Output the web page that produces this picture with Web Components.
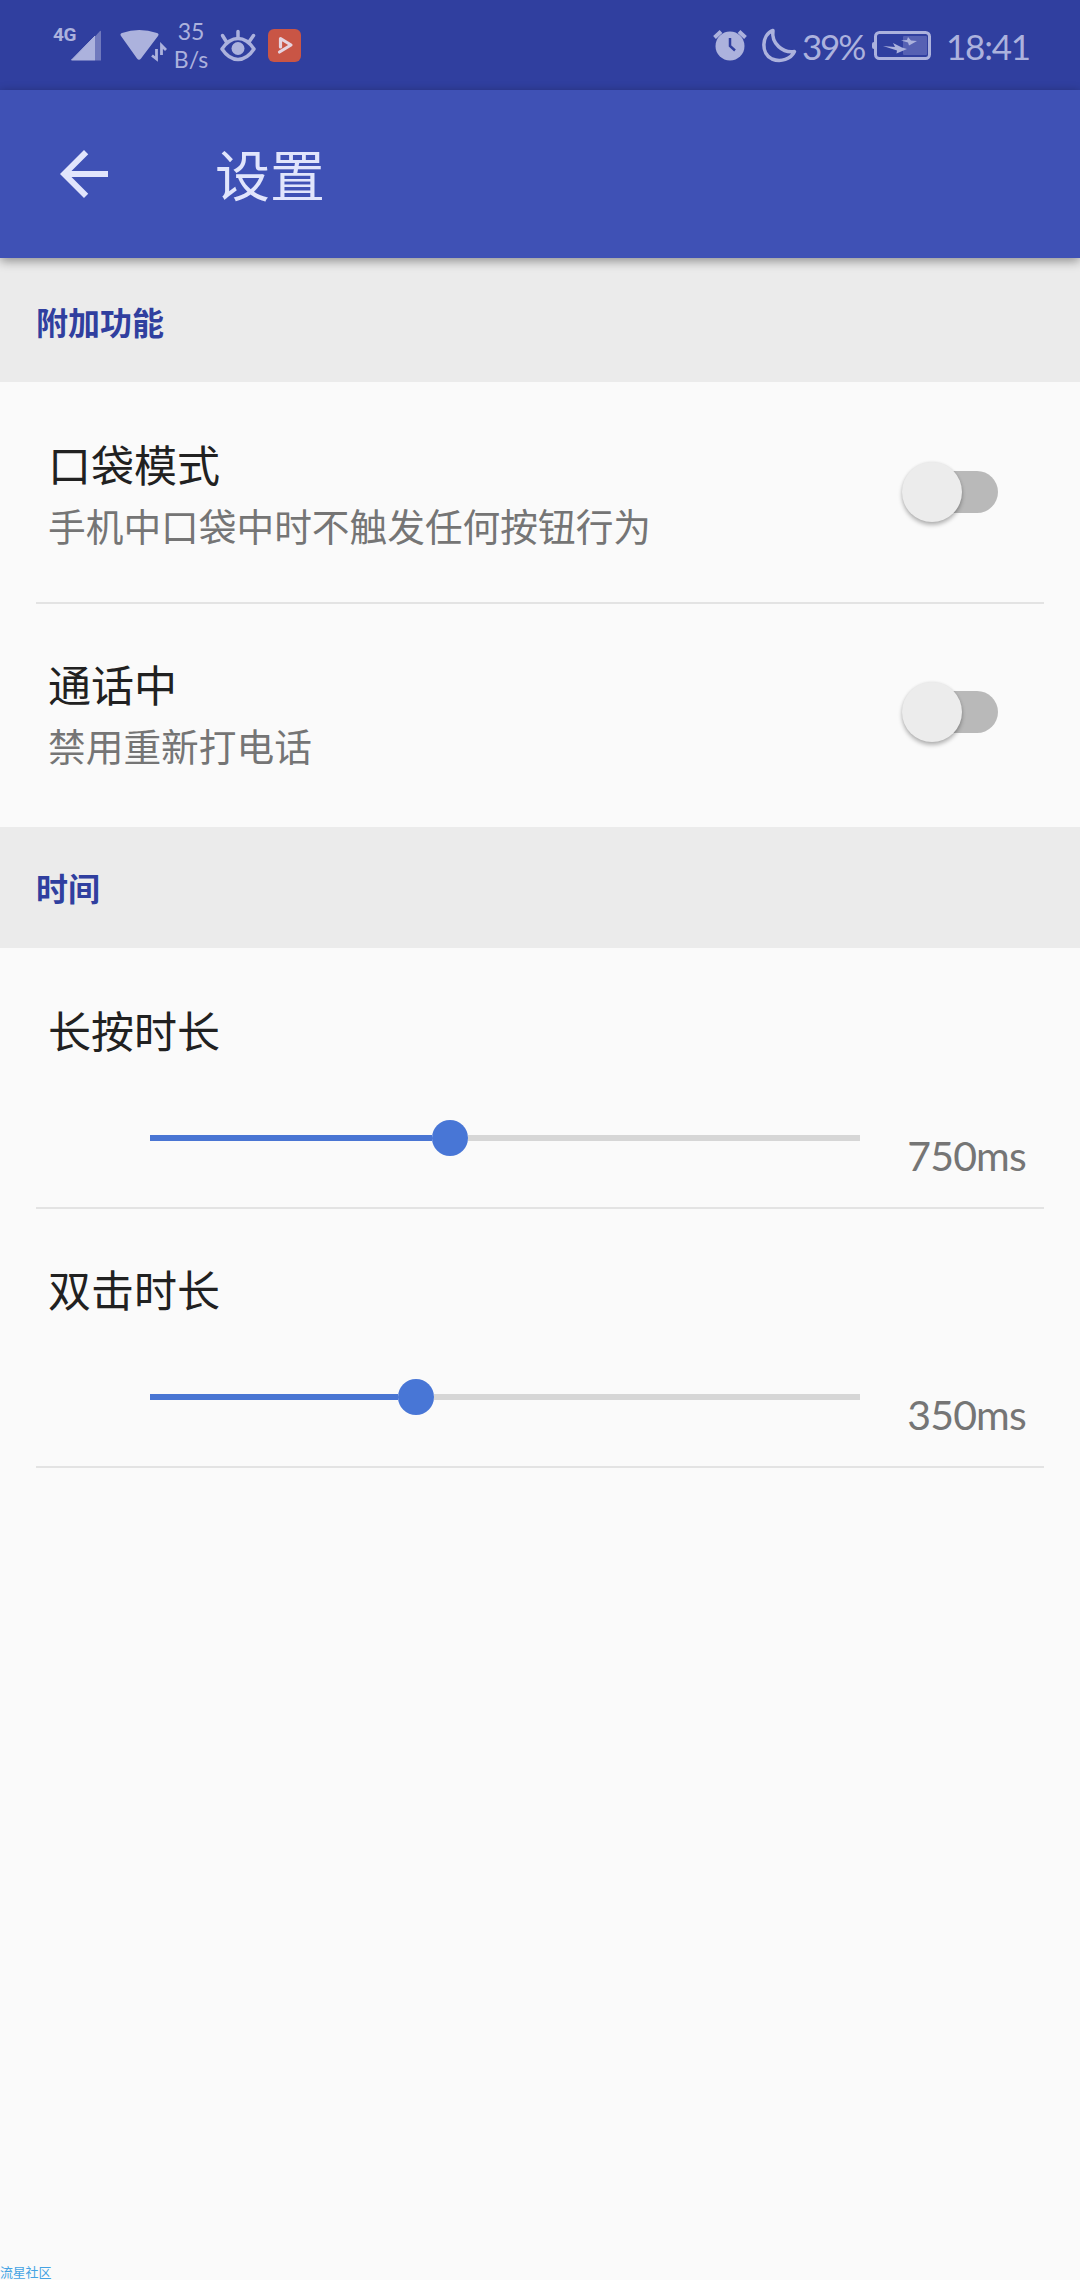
<!DOCTYPE html>
<html lang="zh-CN">
<head>
<meta charset="utf-8">
<title>设置</title>
<style>
  body {
    margin: 0;
    background: #fafafa;
    font-family: "Noto Sans CJK SC", sans-serif;
  }
</style>
</head>
<body>
<settings-screen>
  <status-bar slot="top"></status-bar>
  <app-bar slot="top">设置</app-bar>

  <settings-group>
    <span slot="heading">附加功能</span>
    <switch-row divider>
      口袋模式
      <span slot="summary">手机中口袋中时不触发任何按钮行为</span>
    </switch-row>
    <switch-row>
      通话中
      <span slot="summary">禁用重新打电话</span>
    </switch-row>
  </settings-group>

  <settings-group>
    <span slot="heading">时间</span>
    <slider-row position="300" value="750ms">长按时长</slider-row>
    <slider-row position="266" value="350ms">双击时长</slider-row>
  </settings-group>

  <span slot="footer">流星社区</span>
</settings-screen>

<script>
/**
 * Creates a template from markup.
 *
 * @param {string} html - The markup.
 * @returns {HTMLTemplateElement} The template.
 */
function createTemplate (html) {
  const template = document.createElement('template')
  template.innerHTML = html
  return template
}

const screenTemplate = createTemplate(`
  <style>
    :host {
      display: flex;
      flex-direction: column;
      width: 1080px;
      height: 2280px;
      overflow: hidden;
      background: #fafafa;
    }
    footer {
      margin-top: auto;
      height: 15px;
      font: 13px/15px "Liberation Sans", "Noto Sans CJK SC", sans-serif;
      letter-spacing: -0.2px;
      color: #45a3e3;
    }
  </style>
  <slot name="top"></slot>
  <slot></slot>
  <footer><slot name="footer"></slot></footer>
`)

customElements.define('settings-screen',
  /**
   * Represents the whole screen.
   */
  class extends HTMLElement {
    /**
     * Creates an instance of the current type.
     */
    constructor () {
      super()

      this.attachShadow({ mode: 'open' }).appendChild(screenTemplate.content.cloneNode(true))
    }
  }
)

const statusTemplate = createTemplate(`
  <style>
    :host {
      display: flex;
      justify-content: space-between;
      flex: none;
      box-sizing: border-box;
      height: 90px;
      padding: 0 53px;
      background: #303f9f;
      color: #acb2dd;
      font-family: Lato, sans-serif;
    }
    .side {
      display: flex;
      height: 90px;
    }
    svg {
      display: block;
      flex: none;
    }
    .network {
      width: 24px;
      padding-top: 25px;
      font: bold 19px/20px Roboto, sans-serif;
      letter-spacing: -0.3px;
    }
    .speed {
      width: 42px;
      padding-top: 17px;
      font-size: 23px;
      line-height: 28px;
      text-align: center;
    }
    .percent, .clock {
      font-size: 35px;
      line-height: 92px;
      white-space: nowrap;
    }
    .percent {
      width: 69px;
      letter-spacing: -2.2px;
    }
    .clock {
      width: 81px;
      letter-spacing: -1.2px;
    }
  </style>
  <div class="side">
    <span class="network">4G</span>
    <svg width="93" height="90" viewBox="77 0 93 90" overflow="visible">
      <path d="M71.5 60 L95 36 V60 Z" fill="#acb2dd" stroke="#acb2dd" stroke-linejoin="round"/>
      <path d="M95 36.500 L100 31 Q101 30 101 32 V60.500 H95 Z" fill="#7079bd"/>
      <path d="M121 36 Q119.500 34 122 33 Q139 27 157 33 Q159.500 34 158 36 L141 58.500 Q139 61 137 58.500 Z" fill="#acb2dd"/>
      <path d="M156.500 49 V59 L152 55.500 M161.500 55 V45.500 L166 50" fill="none" stroke="#acb2dd" stroke-width="2.800"/>
    </svg>
    <div class="speed">35<br>B/s</div>
    <svg width="92" height="90" viewBox="212 0 92 90">
      <g fill="none" stroke="#acb2dd" stroke-width="3.500" stroke-linecap="round" stroke-linejoin="round">
        <path d="M222 49 Q229 38.500 238 38.500 Q247 38.500 254 49 Q247 59.500 238 59.500 Q229 59.500 222 49 Z"/>
        <path d="M238 31.500 V38 M222.500 35.500 L226.500 42 M253.500 35.500 L249 42"/>
      </g>
      <circle cx="238" cy="48.500" r="6.500" fill="#acb2dd"/>
      <rect x="268" y="29" width="33" height="33" rx="6" fill="#c95545"/>
      <path d="M280.500 47 V38.500 L291 45 L279.500 52" fill="none" stroke="#e5d3df" stroke-width="3.200" stroke-linejoin="round" stroke-linecap="round"/>
    </svg>
  </div>
  <div class="side">
    <svg width="92" height="90" viewBox="710 0 92 90">
      <circle cx="730" cy="46" r="14.500" fill="#acb2dd"/>
      <path d="M714.500 37.500 L721 31.500 M745.500 37.500 L739 31.500" stroke="#acb2dd" stroke-width="4"/>
      <path d="M730 38 V46 L735 50.500" fill="none" stroke="#303f9f" stroke-width="2.500"/>
      <path d="M773 30.500 C761 35 761 54 772 59 C781 62.500 791 59 794.500 51.500 C783 53.500 771 43.500 773 30.500 Z" fill="none" stroke="#acb2dd" stroke-width="3.500" stroke-linejoin="round"/>
    </svg>
    <span class="percent">39%</span>
    <svg width="75" height="90" viewBox="871 0 75 90">
      <rect x="875.500" y="32.500" width="54" height="26" rx="4" fill="none" stroke="#acb2dd" stroke-width="3"/>
      <path d="M874 42 Q872 42 872 44 V47 Q872 49 874 49 Z" fill="#acb2dd"/>
      <rect x="903" y="36" width="24" height="19" rx="1" fill="#5661b3"/>
      <path d="M883 46 L895 47 L893 43 L902 47.500 L907 49 L896.500 53.500 L897 50.500 Z M901 40.500 L907 40 L908 37 L911 40.500 L917 41 L909 45.500 L908 42.500 Z" fill="#acb2dd"/>
    </svg>
    <span class="clock">18:41</span>
  </div>
`)

customElements.define('status-bar',
  /**
   * Represents the phone's status bar.
   */
  class extends HTMLElement {
    /**
     * Creates an instance of the current type.
     */
    constructor () {
      super()

      this.attachShadow({ mode: 'open' }).appendChild(statusTemplate.content.cloneNode(true))
    }
  }
)

const appBarTemplate = createTemplate(`
  <style>
    :host {
      display: flex;
      flex: none;
      align-items: center;
      gap: 107px;
      box-sizing: border-box;
      height: 168px;
      padding-left: 60px;
      background: #3f51b5;
      color: #e1e5fc;
      font-size: 55px;
      line-height: 70px;
      box-shadow: 0 3px 10px rgba(0, 0, 0, 0.4);
      z-index: 1;
    }
    h1 {
      margin: 0;
      padding-bottom: 4px;
      font: inherit;
    }
  </style>
  <svg width="48" height="48" viewBox="4 4 16 16"><path fill="#e1e5fc" d="M20 11H7.830l5.590-5.590L12 4l-8 8 8 8 1.410-1.410L7.830 13H20v-2z"/></svg>
  <h1><slot></slot></h1>
`)

customElements.define('app-bar',
  /**
   * Represents the app bar with its back arrow and title.
   */
  class extends HTMLElement {
    /**
     * Creates an instance of the current type.
     */
    constructor () {
      super()

      this.attachShadow({ mode: 'open' }).appendChild(appBarTemplate.content.cloneNode(true))
    }
  }
)

const groupTemplate = createTemplate(`
  <style>
    :host {
      display: block;
      flex: none;
    }
    h2 {
      box-sizing: border-box;
      height: 121px;
      margin: 0;
      padding-left: 36px;
      background: #ebebeb;
      color: #303f9f;
      font-size: 32px;
      font-weight: bold;
      line-height: 121px;
    }
    :host(:first-of-type) h2 {
      height: 124px;
      line-height: 127px;
    }
    .rows {
      padding-top: 2px;
    }
    :host(:first-of-type) .rows {
      padding-bottom: 3px;
    }
  </style>
  <h2><slot name="heading"></slot></h2>
  <div class="rows"><slot></slot></div>
`)

customElements.define('settings-group',
  /**
   * Represents a headed group of settings.
   */
  class extends HTMLElement {
    /**
     * Creates an instance of the current type.
     */
    constructor () {
      super()

      this.attachShadow({ mode: 'open' }).appendChild(groupTemplate.content.cloneNode(true))
    }
  }
)

const toggleTemplate = createTemplate(`
  <style>
    :host {
      display: flex;
      align-items: center;
      width: 96px;
      height: 60px;
    }
    .thumb {
      flex: none;
      width: 60px;
      height: 60px;
      border-radius: 50%;
      background: #ececec;
      box-shadow: 0 3px 4px rgba(0, 0, 0, 0.28), 0 0 3px rgba(0, 0, 0, 0.08);
      z-index: 1;
    }
    .track {
      flex: none;
      width: 76px;
      height: 42px;
      margin-left: -40px;
      border-radius: 21px;
      background: #b9b9b9;
    }
  </style>
  <div class="thumb"></div>
  <div class="track"></div>
`)

customElements.define('toggle-switch',
  /**
   * Represents a switch that is off.
   */
  class extends HTMLElement {
    /**
     * Creates an instance of the current type.
     */
    constructor () {
      super()

      this.attachShadow({ mode: 'open' }).appendChild(toggleTemplate.content.cloneNode(true))
    }
  }
)

const switchRowTemplate = createTemplate(`
  <style>
    :host {
      display: flex;
      justify-content: space-between;
      box-sizing: border-box;
      height: 220px;
      margin: 0 36px;
      padding: 54px 46px 0 12px;
      border-bottom: 2px solid transparent;
    }
    :host([divider]) {
      border-bottom-color: #e3e3e3;
    }
    .title {
      color: #212121;
      font-size: 43px;
      line-height: 50px;
    }
    .summary {
      margin-top: 12px;
      color: #757575;
      font-size: 37.700px;
      line-height: 50px;
    }
    toggle-switch {
      margin-top: 24px;
    }
  </style>
  <div>
    <div class="title"><slot></slot></div>
    <div class="summary"><slot name="summary"></slot></div>
  </div>
  <toggle-switch></toggle-switch>
`)

customElements.define('switch-row',
  /**
   * Represents a setting with a title, a summary and a switch.
   */
  class extends HTMLElement {
    /**
     * Creates an instance of the current type.
     */
    constructor () {
      super()

      this.attachShadow({ mode: 'open' }).appendChild(switchRowTemplate.content.cloneNode(true))
    }
  }
)

const sliderRowTemplate = createTemplate(`
  <style>
    :host {
      display: block;
      box-sizing: border-box;
      height: 259px;
      margin: 0 36px;
      padding: 54px 18px 0 12px;
      border-bottom: 2px solid #e3e3e3;
    }
    .title {
      color: #212121;
      font-size: 43px;
      line-height: 50px;
    }
    .control {
      display: flex;
      justify-content: space-between;
      margin: 66px 0 0 102px;
    }
    .slider {
      display: flex;
      align-items: center;
      width: 710px;
      height: 36px;
    }
    .done, .rest {
      height: 6px;
      background: #4975d3;
    }
    .done {
      width: calc(var(--position) - 18px);
    }
    .rest {
      flex: 1;
      background: #d6d6d6;
    }
    .thumb {
      width: 36px;
      height: 36px;
      border-radius: 50%;
      background: #4876d6;
    }
    .value {
      margin-top: 11px;
      color: #757575;
      font: 41px/50px Lato, sans-serif;
      letter-spacing: -0.800px;
      white-space: nowrap;
    }
  </style>
  <div class="title"><slot></slot></div>
  <div class="control">
    <div class="slider">
      <div class="done"></div>
      <div class="thumb"></div>
      <div class="rest"></div>
    </div>
    <div class="value"></div>
  </div>
`)

customElements.define('slider-row',
  /**
   * Represents a setting with a title, a slider and its value.
   */
  class extends HTMLElement {
    /**
     * Creates an instance of the current type.
     */
    constructor () {
      super()

      this.attachShadow({ mode: 'open' }).appendChild(sliderRowTemplate.content.cloneNode(true))
    }

    /**
     * Called when the element is added to the page.
     */
    connectedCallback () {
      this.shadowRoot.querySelector('.slider').style.setProperty('--position', `${this.getAttribute('position')}px`)
      this.shadowRoot.querySelector('.value').textContent = this.getAttribute('value')
    }
  }
)
</script>
</body>
</html>
